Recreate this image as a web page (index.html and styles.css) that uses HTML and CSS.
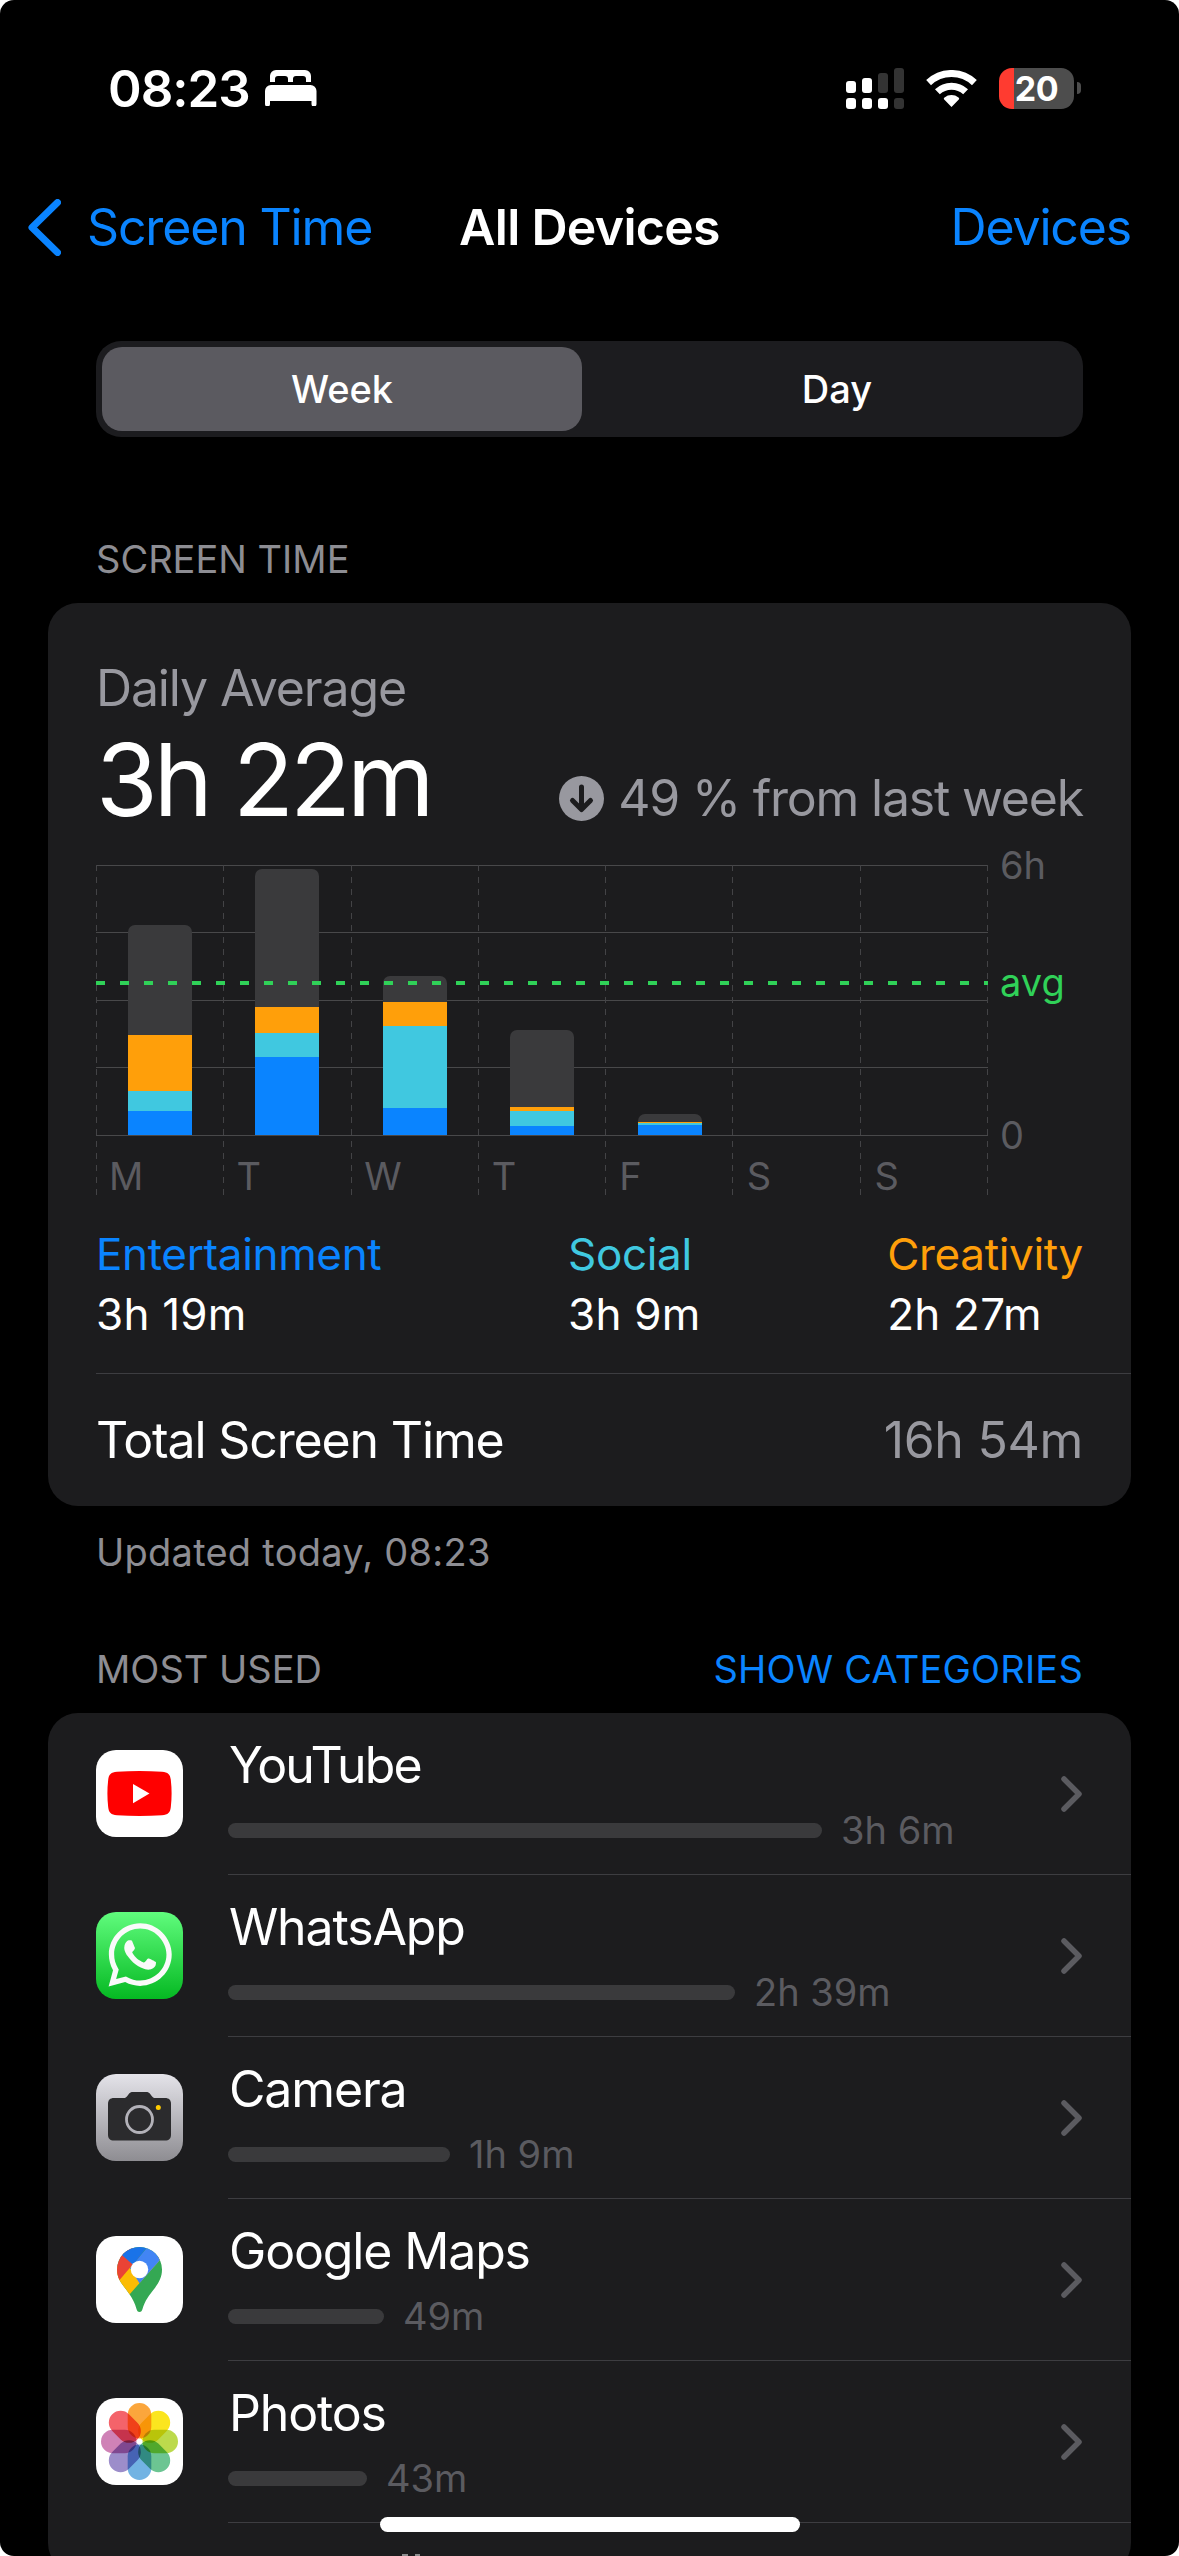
FILE: index.html
```html
<!DOCTYPE html>
<html lang="en">
<head>
    <meta charset="UTF-8">
    <meta name="viewport" content="width=device-width, initial-scale=1.0">
    <title>Screen Time</title>
    <link rel="stylesheet" href="styles.css">
</head>
<body>
    <div class="screen">
        <header class="status-bar">
            <div class="status-left">
                <span class="clock">08:23</span>
                <svg class="bed" width="52" height="36" viewBox="0 0 52 36" fill="#fff">
                    <path d="M5 12V6a6 6 0 0 1 6-6h29a6 6 0 0 1 6 6v6h-5V9a3 3 0 0 0-3-3h-7a3 3 0 0 0-3 3v3h-5V9a3 3 0 0 0-3-3h-7a3 3 0 0 0-3 3v3z"/>
                    <path d="M0 21a6 6 0 0 1 6-6h39.500a6 6 0 0 1 6 6v13a2.500 2.500 0 0 1-5 0v-3H5v3a2.500 2.500 0 0 1-5 0z"/>
                </svg>
            </div>
            <div class="status-right">
                <svg width="58" height="41" viewBox="0 0 58 41" fill="#fff">
                    <rect x="0" y="13" width="10" height="12" rx="3"/>
                    <rect x="16" y="10" width="10" height="15" rx="3"/>
                    <rect x="32" y="5" width="10" height="20" rx="3" fill="#333"/>
                    <rect x="48" y="0" width="10" height="25" rx="3" fill="#333"/>
                    <rect x="0" y="30" width="10" height="11" rx="3"/>
                    <rect x="16" y="30" width="10" height="11" rx="3"/>
                    <rect x="32" y="30" width="10" height="11" rx="3"/>
                    <rect x="48" y="30" width="10" height="11" rx="3" fill="#333"/>
                </svg>
                <svg class="wifi" width="51" height="37" viewBox="0 0 51 37">
                    <path d="M2.600 12.600a33.300 33.300 0 0 1 45.800 0M11.400 21.800a20.500 20.500 0 0 1 28.200 0" fill="none" stroke="#fff" stroke-width="7"/>
                    <path d="M25.500 37l-7.300-7.600c-.6-.7-.4-1.400.3-1.900a11.500 11.500 0 0 1 14 0c.7.5.9 1.200.3 1.900z" fill="#fff"/>
                </svg>
                <div class="battery">20</div>
                <div class="battery-tip"></div>
            </div>
        </header>

        <nav class="nav">
            <a class="nav-back">
                <svg width="33" height="57" viewBox="0 0 33 57"><path d="M29.500 3.500L4 28.500l25.500 25" fill="none" stroke="#0a84ff" stroke-width="7" stroke-linecap="round" stroke-linejoin="round"/></svg>
                <span>Screen Time</span>
            </a>
            <h1 class="nav-title">All Devices</h1>
            <a class="nav-action">Devices</a>
        </nav>

        <div class="segmented">
            <div class="segment active">Week</div>
            <div class="segment">Day</div>
        </div>

        <div class="section-head first">SCREEN TIME</div>
        <section class="card">
            <div class="summary">
                <div class="label">Daily Average</div>
                <div class="average-row">
                    <div class="average">3h 22m</div>
                    <div class="change">
                        <svg width="45" height="45" viewBox="0 0 45 45">
                            <circle cx="22.500" cy="22.500" r="22.500" fill="#98989f"/>
                            <path d="M22.500 11v22M13.500 24.500l9 9 9-9" fill="none" stroke="#1c1c1e" stroke-width="5" stroke-linecap="round" stroke-linejoin="round"/>
                        </svg>
                        <span>49 % from last week</span>
                    </div>
                </div>

                <div class="chart">
                    <div class="plot">
                        <svg class="grid" width="893" height="331" viewBox="0 0 893 331" fill="none" shape-rendering="crispEdges">
                            <path d="M0 .5h892M0 67.500h892M0 135.500h892M0 202.500h892M0 270.500h892" stroke="#48484a"/>
                            <path d="M.5 0v331M127.500 0v331M255.500 0v331M382.500 0v331M509.500 0v331M636.500 0v331M764.500 0v331M891.500 0v331" stroke="#434346" stroke-dasharray="6 6"/>
                        </svg>
                        <div class="bars">
                            <div class="day"><div class="bar"><i class="other" style="height:110px"></i><i class="creativity" style="height:56px"></i><i class="social" style="height:20px"></i><i class="entertainment" style="height:24px"></i></div></div>
                            <div class="day"><div class="bar"><i class="other" style="height:138px"></i><i class="creativity" style="height:26px"></i><i class="social" style="height:24px"></i><i class="entertainment" style="height:78px"></i></div></div>
                            <div class="day"><div class="bar"><i class="other" style="height:26px"></i><i class="creativity" style="height:24px"></i><i class="social" style="height:82px"></i><i class="entertainment" style="height:27px"></i></div></div>
                            <div class="day"><div class="bar"><i class="other" style="height:77px"></i><i class="creativity" style="height:4px"></i><i class="social" style="height:15px"></i><i class="entertainment" style="height:9px"></i></div></div>
                            <div class="day"><div class="bar"><i class="other" style="height:8px"></i><i class="creativity" style="height:1px"></i><i class="social" style="height:2px"></i><i class="entertainment" style="height:10px"></i></div></div>
                            <div class="day"></div>
                            <div class="day"></div>
                        </div>
                        <div class="days"><span>M</span><span>T</span><span>W</span><span>T</span><span>F</span><span>S</span><span>S</span></div>
                        <div class="avg-line"></div>
                    </div>
                    <div class="axis">
                        <span>6h</span>
                        <span class="axis-avg">avg</span>
                        <span class="axis-zero">0</span>
                    </div>
                </div>

                <div class="legend">
                    <div>
                        <div class="legend-name c-blue">Entertainment</div>
                        <div class="legend-time">3h 19m</div>
                    </div>
                    <div>
                        <div class="legend-name c-teal">Social</div>
                        <div class="legend-time">3h 9m</div>
                    </div>
                    <div>
                        <div class="legend-name c-orange">Creativity</div>
                        <div class="legend-time">2h 27m</div>
                    </div>
                </div>
            </div>
            <div class="total">
                <span>Total Screen Time</span>
                <span class="total-value">16h 54m</span>
            </div>
        </section>
        <div class="updated">Updated today, 08:23</div>

        <div class="section-head">
            <span>MOST USED</span>
            <a>SHOW CATEGORIES</a>
        </div>
        <section class="card apps">
            <div class="app">
                <svg class="app-icon" viewBox="0 0 87 87">
                    <rect width="87" height="87" rx="20" fill="#fff"/>
                    <path d="M21 21.800q22.500-1.600 45 0c6 .4 8.200 2.800 8.800 8q1.600 13.700 0 27.400c-.6 5.200-2.800 7.600-8.800 8q-22.500 1.600-45 0c-6-.4-8.200-2.800-8.800-8q-1.600-13.700 0-27.400c.6-5.200 2.800-7.600 8.800-8z" fill="#f00"/>
                    <path d="M37 34l16.500 9.600L37 53.200z" fill="#fff"/>
                </svg>
                <div class="app-body">
                    <div class="app-info">
                        <div class="app-name tight">YouTube</div>
                        <div class="usage"><div class="usage-bar" style="width:594px"></div><span>3h 6m</span></div>
                    </div>
                    <svg class="chevron" viewBox="0 0 21 36"><path d="M3 3l15 15L3 33"/></svg>
                </div>
            </div>
            <div class="app">
                <svg class="app-icon" viewBox="0 0 87 87">
                    <linearGradient id="wa" x2="0" y2="1"><stop stop-color="#60fc7d"/><stop offset="1" stop-color="#05b922"/></linearGradient>
                    <rect width="87" height="87" rx="20" fill="url(#wa)"/>
                    <path transform="translate(12.600 6.800) scale(.1409)" fill="#fafafa" d="M380.900 97.100C339 55.100 283.200 32 223.900 32c-122.400 0-222 99.600-222 222 0 39.100 10.200 77.300 29.600 111L0 480l117.700-30.900c32.400 17.700 68.900 27 106.100 27h.1c122.300 0 224.100-99.600 224.100-222 0-59.300-25.200-115-67.100-157zm-157 341.600c-33.200 0-65.700-8.900-94-25.700l-6.700-4-69.800 18.300L72 359.200l-4.400-7c-18.500-29.400-28.200-63.300-28.200-98.200 0-101.700 82.800-184.500 184.600-184.500 49.300 0 95.600 19.200 130.400 54.100 34.800 34.900 56.200 81.200 56.100 130.500 0 101.800-84.900 184.600-186.600 184.600zm101.200-138.200c-5.500-2.800-32.800-16.200-37.900-18-5.100-1.900-8.800-2.800-12.500 2.800-3.700 5.600-14.300 18-17.600 21.800-3.200 3.700-6.500 4.200-12 1.400-32.600-16.300-54-29.100-75.500-66-5.700-9.800 5.700-9.100 16.300-30.300 1.800-3.700.9-6.900-.5-9.700-1.400-2.800-12.500-30.100-17.100-41.200-4.500-10.800-9.100-9.300-12.500-9.500-3.200-.2-6.900-.2-10.600-.2-3.700 0-9.700 1.400-14.800 6.900-5.100 5.600-19.400 19-19.400 46.300 0 27.300 19.900 53.700 22.600 57.400 2.800 3.700 39.100 59.700 94.800 83.800 35.200 15.200 49 16.500 66.600 13.900 10.700-1.600 32.800-13.400 37.400-26.400 4.600-13 4.600-24.100 3.200-26.400-1.300-2.500-5-3.900-10.500-6.600z"/>
                </svg>
                <div class="app-body">
                    <div class="app-info">
                        <div class="app-name">WhatsApp</div>
                        <div class="usage"><div class="usage-bar" style="width:507px"></div><span>2h 39m</span></div>
                    </div>
                    <svg class="chevron" viewBox="0 0 21 36"><path d="M3 3l15 15L3 33"/></svg>
                </div>
            </div>
            <div class="app">
                <svg class="app-icon" viewBox="0 0 87 87">
                    <linearGradient id="cam" x2="0" y2="1"><stop stop-color="#e4e3e9"/><stop offset="1" stop-color="#8e8d92"/></linearGradient>
                    <rect width="87" height="87" rx="20" fill="url(#cam)"/>
                    <path d="M18 24h9.500c2 0 2.800-.7 4-2.300l1.300-1.700c1.200-1.500 2.200-2 4.200-2h13c2 0 3 .5 4.200 2l1.300 1.700c1.200 1.600 2 2.300 4 2.300H69c4 0 6 2 6 6v30.500c0 4-2 6-6 6H18c-4 0-6-2-6-6V30c0-4 2-6 6-6z" fill="#2b2b2d"/>
                    <circle cx="43.500" cy="45.500" r="13" fill="none" stroke="#b3b2b9" stroke-width="2.800"/>
                    <circle cx="62.300" cy="33.500" r="2.500" fill="#fc0"/>
                </svg>
                <div class="app-body">
                    <div class="app-info">
                        <div class="app-name">Camera</div>
                        <div class="usage"><div class="usage-bar" style="width:222px"></div><span>1h 9m</span></div>
                    </div>
                    <svg class="chevron" viewBox="0 0 21 36"><path d="M3 3l15 15L3 33"/></svg>
                </div>
            </div>
            <div class="app">
                <svg class="app-icon" viewBox="0 0 87 87">
                    <clipPath id="pin"><path d="M43.500 11A22.500 22.500 0 0 1 66 33.500c0 7.500-3 13-7.500 19-5.500 7-9.500 12-12 20.500-.6 2-1.300 3-3 3s-2.400-1-3-3c-1.600-6-4-10.500-7.500-15.500C27 49 21 43.500 21 33.500A22.500 22.500 0 0 1 43.500 11z"/></clipPath>
                    <rect width="87" height="87" rx="20" fill="#fff"/>
                    <g clip-path="url(#pin)">
                        <path d="M0 0h87v87H0z" fill="#34a853"/>
                        <path d="M70 17.200L29.500 63 10 60V30h30z" fill="#fbbc04"/>
                        <path d="M17.700 51L43.500 20.500 30 5H10v46z" fill="#ea4335"/>
                        <path d="M70 17.200L43.500 47.200 34 32.300 58 3l14 5z" fill="#4285f4"/>
                        <path d="M19 13l18 15.800L60 0H20z" fill="#1a73e8"/>
                    </g>
                    <circle cx="43.500" cy="33.500" r="8.700" fill="#fff"/>
                </svg>
                <div class="app-body">
                    <div class="app-info">
                        <div class="app-name">Google Maps</div>
                        <div class="usage"><div class="usage-bar" style="width:156px"></div><span>49m</span></div>
                    </div>
                    <svg class="chevron" viewBox="0 0 21 36"><path d="M3 3l15 15L3 33"/></svg>
                </div>
            </div>
            <div class="app">
                <svg class="app-icon photos" viewBox="0 0 87 87">
                    <rect width="87" height="87" rx="20" fill="#fff"/>
                    <rect class="petal" x="31.700" y="5" width="23.600" height="35.500" rx="11.800" fill="#fba63c"/>
                    <rect class="petal" x="31.700" y="5" width="23.600" height="35.500" rx="11.800" fill="#fbe51f" transform="rotate(45 43.500 43.500)"/>
                    <rect class="petal" x="31.700" y="5" width="23.600" height="35.500" rx="11.800" fill="#bcda4c" transform="rotate(90 43.500 43.500)"/>
                    <rect class="petal" x="31.700" y="5" width="23.600" height="35.500" rx="11.800" fill="#6cc592" transform="rotate(135 43.500 43.500)"/>
                    <rect class="petal" x="31.700" y="5" width="23.600" height="35.500" rx="11.800" fill="#72b3e3" transform="rotate(180 43.500 43.500)"/>
                    <rect class="petal" x="31.700" y="5" width="23.600" height="35.500" rx="11.800" fill="#9c8dca" transform="rotate(225 43.500 43.500)"/>
                    <rect class="petal" x="31.700" y="5" width="23.600" height="35.500" rx="11.800" fill="#cf82b6" transform="rotate(270 43.500 43.500)"/>
                    <rect class="petal" x="31.700" y="5" width="23.600" height="35.500" rx="11.800" fill="#f4636a" transform="rotate(315 43.500 43.500)"/>
                    <circle cx="43.500" cy="43.500" r="2.500" fill="#fff"/>
                </svg>
                <div class="app-body">
                    <div class="app-info">
                        <div class="app-name">Photos</div>
                        <div class="usage"><div class="usage-bar" style="width:139px"></div><span>43m</span></div>
                    </div>
                    <svg class="chevron" viewBox="0 0 21 36"><path d="M3 3l15 15L3 33"/></svg>
                </div>
            </div>
            <!-- next row, only its top edge is on screen -->
            <svg class="next-row" width="20" height="2" viewBox="0 0 20 2"><path d="M1 1h6M14 1h5" stroke="#8e8e90" stroke-width="2"/></svg>
        </section>
        <div class="home-indicator"></div>
    </div>
</body>
</html>
```
FILE: styles.css
```css
body {
    margin: 0;
    background: #fff;
    font-family: Inter, "Liberation Sans", sans-serif;
    color: #fff;
}

.screen {
    position: relative;
    width: 1179px;
    height: 2556px;
    background: #000;
    border-radius: 14px;
    overflow: hidden;
}

/* status bar */
.status-bar {
    display: flex;
    justify-content: space-between;
    align-items: center;
    height: 176px;
    padding: 0 98px 0 108px;
}

.status-left,
.status-right {
    display: flex;
    align-items: center;
}

.clock {
    font-size: 51px;
    font-weight: 600;
    letter-spacing: -1px;
}

.bed {
    margin-left: 15px;
}

.wifi {
    margin-left: 22px;
}

.battery {
    width: 75px;
    height: 41px;
    margin-left: 22px;
    border-radius: 13px;
    background: linear-gradient(90deg, #ff3b30 15px, #4d4d4d 15px);
    font-size: 34px;
    font-weight: 700;
    letter-spacing: -0.5px;
    line-height: 41px;
    text-align: center;
}

.battery-tip {
    width: 4px;
    height: 12px;
    margin-left: 3px;
    border-radius: 0 4px 4px 0;
    background: #4d4d4d;
}

/* navigation */
.nav {
    display: grid;
    grid-template-columns: 1fr auto 1fr;
    align-items: center;
    height: 102px;
    padding: 0 28px;
    font-size: 50px;
    letter-spacing: -1.15px;
    color: #0a84ff;
}

.nav-back {
    display: flex;
    align-items: center;
    gap: 26px;
}

.nav-title {
    margin: 0;
    font-size: 50px;
    font-weight: 600;
    letter-spacing: -0.7px;
    color: #fff;
}

.nav-action {
    padding-right: 20px;
    text-align: right;
}

/* week / day switch */
.segmented {
    display: flex;
    justify-content: space-between;
    height: 84px;
    margin: 63px 96px 0;
    padding: 6px;
    border-radius: 25px;
    background: #1c1c1f;
}

.segment {
    width: 480px;
    border-radius: 20px;
    font-size: 38px;
    font-weight: 500;
    line-height: 84px;
    text-align: center;
}

.segment.active {
    background: #5b5a60;
}

/* section headers */
.section-head {
    display: flex;
    justify-content: space-between;
    margin-top: 77px;
    padding: 0 96px 24px;
    font-size: 38px;
    line-height: 40px;
    color: #8d8d93;
}

.section-head.first {
    margin-top: 102px;
}

.section-head a {
    letter-spacing: 0.2px;
    color: #0a84ff;
}

.card {
    margin: 0 48px;
    border-radius: 30px;
    background: #1c1c1e;
    overflow: hidden;
}

/* summary */
.summary {
    padding: 55px 48px 29px;
}

.label {
    font-size: 50px;
    line-height: 60px;
    letter-spacing: -1.15px;
    color: #98989f;
}

.average-row {
    display: flex;
    justify-content: space-between;
    align-items: flex-end;
    margin-top: 12px;
}

.average {
    font-size: 100px;
    line-height: 100px;
    letter-spacing: -4px;
}

.change {
    display: flex;
    align-items: center;
    gap: 14px;
    margin-bottom: 2px;
    font-size: 50px;
    line-height: 60px;
    letter-spacing: -1.2px;
    color: #98989f;
}

/* chart */
.chart {
    display: flex;
    height: 330px;
    margin-top: 35px;
}

.plot {
    position: relative;
    width: 893px;
}

.grid {
    position: absolute;
    top: 0;
    left: 0;
}

.bars {
    position: relative;
    display: grid;
    grid-template-columns: repeat(7, 1fr);
    width: 893px;
    height: 270px;
}

.day {
    display: flex;
    justify-content: center;
    align-items: flex-end;
}

.bar {
    width: 64px;
    border-radius: 7px 7px 0 0;
    overflow: hidden;
}

.bar i {
    display: block;
}

.other { background: #3a3a3c; }
.creativity { background: #ff9f0a; }
.social { background: #40c8e0; }
.entertainment { background: #0a84ff; }

.days {
    display: grid;
    grid-template-columns: repeat(7, 1fr);
    width: 893px;
    margin-top: 21px;
    font-size: 38px;
    line-height: 40px;
    color: #5b5b60;
}

.days span {
    padding-left: 13px;
}

.avg-line {
    position: absolute;
    top: 116px;
    left: 0;
    width: 892px;
    height: 4px;
    background: repeating-linear-gradient(90deg, #30d158 0 9px, transparent 9px 24px);
}

.axis {
    display: flex;
    flex-direction: column;
    margin: -20px 0 0 11px;
    font-size: 38px;
    line-height: 40px;
    color: #5b5b60;
}

.axis-avg {
    margin-top: 77px;
    color: #30d158;
}

.axis-zero {
    margin-top: 113px;
}

.legend {
    display: flex;
    justify-content: space-between;
    margin-top: 29px;
    font-size: 44px;
    line-height: 60px;
}

.legend-name {
    letter-spacing: -0.35px;
}

.legend-time {
    letter-spacing: 0.2px;
}

.c-blue { color: #0a84ff; }
.c-teal { color: #40c8e0; }
.c-orange { color: #ff9f0a; }

.total {
    display: flex;
    justify-content: space-between;
    margin-left: 48px;
    padding-right: 48px;
    border-top: 1px solid #3d3d41;
    font-size: 50px;
    line-height: 132px;
    letter-spacing: -1.15px;
}

.total-value {
    letter-spacing: -0.3px;
    color: #98989f;
}

.updated {
    margin-top: 26px;
    padding: 0 96px;
    font-size: 38px;
    line-height: 40px;
    letter-spacing: 0.25px;
    color: #8d8d93;
}

/* app list */
.apps {
    height: 860px;
}

.app {
    display: flex;
    height: 162px;
    padding-left: 48px;
}

.app-icon {
    width: 87px;
    height: 87px;
    margin-top: 37px;
}

.petal {
    mix-blend-mode: multiply;
}

.photos {
    isolation: isolate;
}

.app-body {
    display: flex;
    flex: 1;
    align-items: center;
    justify-content: space-between;
    margin-left: 45px;
    padding: 0 49px 2px 0;
    border-bottom: 1px solid #3d3d41;
}

.app-name {
    margin-bottom: 15px;
    padding-left: 1px;
    font-size: 50px;
    line-height: 60px;
    letter-spacing: -1.15px;
}

.app-name.tight {
    letter-spacing: -1.9px;
}

.usage {
    display: flex;
    align-items: center;
    gap: 19px;
    font-size: 38px;
    line-height: 40px;
    color: #5b5b60;
}

.usage-bar {
    height: 15px;
    border-radius: 8px;
    background: #3a3a3c;
}

.chevron {
    width: 21px;
    height: 36px;
    margin-top: 3px;
    fill: none;
    stroke: #5b5b60;
    stroke-width: 5.5px;
    stroke-linecap: round;
    stroke-linejoin: round;
}

.next-row {
    display: block;
    margin: 31px 0 0 353px;
}

.home-indicator {
    position: absolute;
    left: 380px;
    bottom: 24px;
    width: 420px;
    height: 15px;
    border-radius: 8px;
    background: #fff;
}
```
